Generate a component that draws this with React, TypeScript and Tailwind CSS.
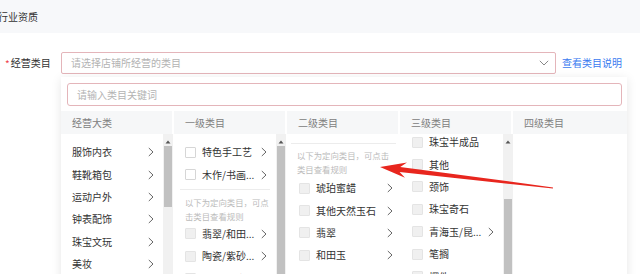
import React from "react";

const Chevron = () => (
  <svg width="6" height="10" viewBox="0 0 6 10" className="shrink-0">
    <path d="M0.8 1 L5 5 L0.8 9" fill="none" stroke="#666" strokeWidth="1" />
  </svg>
);

const UpArrow = () => (
  <svg width="6" height="4" viewBox="0 0 6 4">
    <path d="M0.5 3.5 L3 0.5 L5.5 3.5 Z" fill="#555" />
  </svg>
);

const Box = ({ disabled }: { disabled?: boolean }) => (
  <span
    className={
      disabled
        ? "w-[11px] h-[11px] shrink-0 rounded-[1px] border border-[#e4e4e4] bg-[#f0f0f0]"
        : "w-[11px] h-[11px] shrink-0 rounded-[1px] border border-[#d6d6d6] bg-white"
    }
  />
);

const Scroll = ({ thumbTop, thumbH }: { thumbTop: number; thumbH?: number }) => (
  <div className="w-[10px] shrink-0 bg-[#f1f1f1] relative flex flex-col items-center">
    <div className="h-[6px] w-full flex-none" />
    <UpArrow />
    <div
      className="absolute left-[1px] right-[1px] bg-[#c1c1c1]"
      style={{ top: thumbTop, height: thumbH ?? 400 }}
    />
  </div>
);

const Row = ({
  text,
  cb,
  disabled,
  arrow,
  pl,
  pr,
}: {
  text: string;
  cb?: boolean;
  disabled?: boolean;
  arrow?: boolean;
  pl: string;
  pr: string;
}) => (
  <div className={`h-[22.4px] flex items-center justify-between ${pl} ${pr}`}>
    <div className="flex items-center gap-[6px]">
      {cb && <Box disabled={disabled} />}
      <span className="text-[10px] leading-none text-[#333] whitespace-nowrap">{text}</span>
    </div>
    {arrow && <Chevron />}
  </div>
);

const Header = ({ label }: { label: string }) => (
  <div className="h-[23px] mr-[2px] bg-[#f6f7f8] flex items-center pl-[11px] text-[10px] text-[#808080]">
    {label}
  </div>
);

export default function App() {
  return (
    <div className="w-[640px] h-[274px] overflow-hidden bg-white relative font-['Noto_Sans_CJK_SC',sans-serif]">
      <div className="h-[33px] bg-[#f7f8fa] flex items-center">
        <span className="ml-[-2px] text-[10px] text-[#333]">行业资质</span>
      </div>

      <div className="mt-[19px] h-[22px] flex items-center">
        <div className="w-[61px] flex items-center pl-[5px] gap-[1px]">
          <span className="text-[10px] text-[#f0414b] leading-none mt-[1px]">*</span>
          <span className="text-[10px] text-[#333] leading-none">经营类目</span>
        </div>
        <div className="w-[495px] h-[22px] border border-[#e4b5ba] rounded-[2px] flex items-center justify-between pl-[9px] pr-[6px]">
          <span className="text-[10px] text-[#b3b3b3] leading-none">请选择店铺所经营的类目</span>
          <svg width="10" height="6" viewBox="0 0 10 6">
            <path d="M0.8 0.8 L5 5 L9.2 0.8" fill="none" stroke="#888" strokeWidth="1" />
          </svg>
        </div>
        <span className="ml-[6px] text-[10px] text-[#3a7af0] leading-none">查看类目说明</span>
      </div>

      {/* dropdown panel */}
      <div className="absolute left-[61px] top-[77px] w-[566px] h-[220px] bg-white shadow-[0_2px_10px_rgba(0,0,0,0.10)] flex flex-col">
        <div className="mt-[6px] ml-[6px] mr-[5px] h-[23px] border border-[#e4b5ba] rounded-[3px] flex items-center pl-[9px]">
          <span className="text-[10px] text-[#b3b3b3] leading-none">请输入类目关键词</span>
        </div>

        <div className="mt-[5px] flex flex-1 min-h-0">
          {/* col 1 */}
          <div className="w-[113px] flex flex-col">
            <Header label="经营大类" />
            <div className="flex flex-1 overflow-hidden">
              <div className="flex-1 pt-[7px]">
                {["服饰内衣", "鞋靴箱包", "运动户外", "钟表配饰", "珠宝文玩", "美妆"].map((t) => (
                  <Row key={t} text={t} arrow pl="pl-[11px]" pr="pr-[9px]" />
                ))}
              </div>
              <div className="mr-[1px] flex">
                <Scroll thumbTop={12} thumbH={61} />
              </div>
            </div>
          </div>

          {/* col 2 */}
          <div className="w-[113px] flex flex-col">
            <Header label="一级类目" />
            <div className="flex flex-1 overflow-hidden">
              <div className="flex-1 pt-[7px]">
                <Row text="特色手工艺" cb arrow pl="pl-[11px]" pr="pr-[9px]" />
                <Row text="木作/书画..." cb arrow pl="pl-[11px]" pr="pr-[9px]" />
                <div className="mt-[3px] mx-[6px] h-px bg-[#ececec]" />
                <div className="mt-[5px] pl-[11px] text-[8.4px] leading-[14px] text-[#bbb] whitespace-nowrap">
                  以下为定向类目，可点
                  <br />
                  击类目查看规则
                </div>
                <Row text="翡翠/和田..." cb disabled arrow pl="pl-[11px]" pr="pr-[9px]" />
                <Row text="陶瓷/紫砂..." cb disabled arrow pl="pl-[11px]" pr="pr-[9px]" />
                <Row text="钻石/彩宝..." cb disabled arrow pl="pl-[11px]" pr="pr-[9px]" />
              </div>
              <div className="mr-[1px] flex">
                <Scroll thumbTop={12} />
              </div>
            </div>
          </div>

          {/* col 3 */}
          <div className="w-[113px] flex flex-col">
            <Header label="二级类目" />
            <div className="flex-1 overflow-hidden pt-[9px]">
              <div className="mx-[4px] h-px bg-[#ececec]" />
              <div className="mt-[4px] pl-[10px] text-[8.4px] leading-[14px] text-[#bbb] whitespace-nowrap">
                以下为定向类目，可点击
                <br />
                类目查看规则
              </div>
              <div className="mt-[1px]">
                {["琥珀蜜蜡", "其他天然玉石", "翡翠", "和田玉"].map((t) => (
                  <Row key={t} text={t} cb disabled arrow pl="pl-[12px]" pr="pr-[7px]" />
                ))}
              </div>
            </div>
          </div>

          {/* col 4 */}
          <div className="w-[113px] flex flex-col">
            <Header label="三级类目" />
            <div className="flex flex-1 overflow-hidden">
              <div className="flex-1 mt-[-3px]">
                <Row text="珠宝半成品" cb disabled pl="pl-[12px]" pr="pr-[9px]" />
                <Row text="其他" cb disabled pl="pl-[12px]" pr="pr-[9px]" />
                <Row text="颈饰" cb disabled pl="pl-[12px]" pr="pr-[9px]" />
                <Row text="珠宝奇石" cb disabled pl="pl-[12px]" pr="pr-[9px]" />
                <Row text="青海玉/昆..." cb disabled arrow pl="pl-[12px]" pr="pr-[9px]" />
                <Row text="笔搁" cb disabled pl="pl-[12px]" pr="pr-[9px]" />
                <Row text="摆件" cb disabled pl="pl-[12px]" pr="pr-[9px]" />
              </div>
              <div className="flex">
                <Scroll thumbTop={65} />
              </div>
            </div>
          </div>

          {/* col 5 */}
          <div className="w-[114px] flex flex-col">
            <div className="h-[23px] bg-[#f6f7f8] flex items-center pl-[11px] text-[10px] text-[#808080]">
              四级类目
            </div>
            <div className="flex-1" />
          </div>
        </div>
      </div>

      {/* red annotation arrow */}
      <svg className="absolute left-0 top-0 pointer-events-none" width="640" height="274" viewBox="0 0 640 274">
        <polygon
          points="380,167 407,162.6 400.2,166.9 553.1,187.4 552.9,188.6 399.6,171.9 405,177.8"
          fill="#e8261e"
        />
      </svg>
    </div>
  );
}
